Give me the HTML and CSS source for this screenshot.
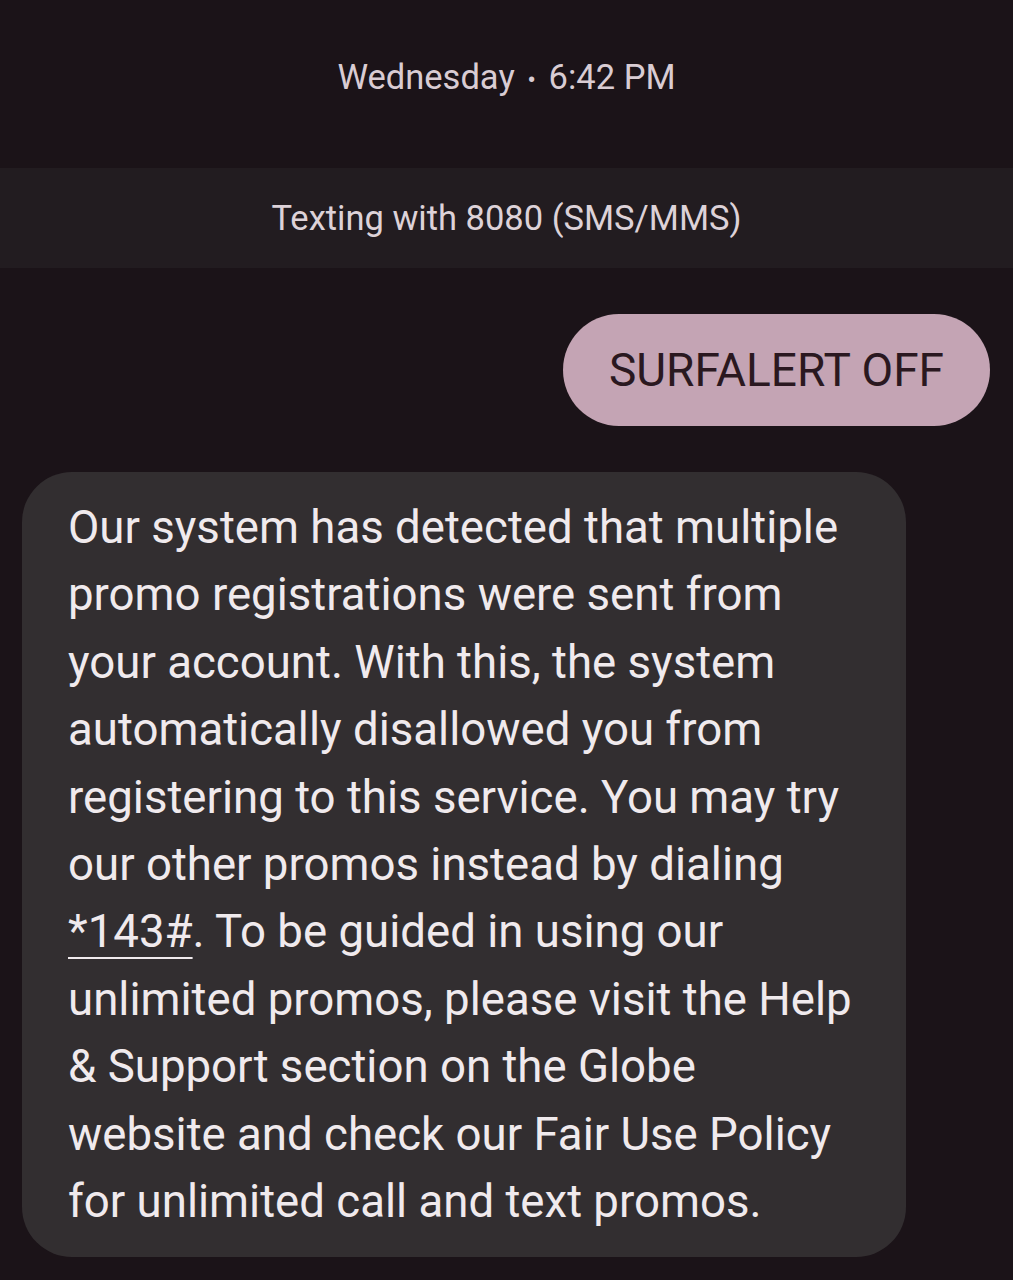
FILE: index.html
```html
<!DOCTYPE html>
<html lang="en">
<head>
  <meta charset="UTF-8" />
  <meta name="viewport" content="width=device-width, initial-scale=1.0"/>
  <title>8080</title>
  <link rel="stylesheet" href="styles.css">
</head>
<body>
  <div class="thread">
    <div class="stamp">Wednesday <span class="dot">•</span> 6:42 PM</div>

    <div class="channel">Texting with 8080 (SMS/MMS)</div>

    <div class="row row-out">
      <div class="bubble bubble-out">SURFALERT OFF</div>
    </div>

    <div class="row row-in">
      <div class="bubble bubble-in">
        Our system has detected that multiple<br>
        promo registrations were sent from<br>
        your account. With this, the system<br>
        automatically disallowed you from<br>
        registering to this service. You may try<br>
        our other promos instead by dialing<br>
        <span class="link">*143#</span>. To be guided in using our<br>
        unlimited promos, please visit the Help<br>
        &amp; Support section on the Globe<br>
        website and check our Fair Use Policy<br>
        for unlimited call and text promos.
      </div>
    </div>
  </div>
</body>
</html>
```

FILE: styles.css
```css
* { box-sizing: border-box; margin: 0; padding: 0; }
body {
  font-family: Roboto, "Noto Sans", sans-serif;
  background: #1b1318;
  color: #ece4e8;
  width: 1013px;
  height: 1280px;
  overflow: hidden;
}
.thread {
  display: flex;
  flex-direction: column;
}
.stamp {
  height: 168px;
  padding-top: 52px;
  line-height: 50px;
  text-align: center;
  font-size: 34.5px;
  color: #d9ccd3;
}
.stamp .dot {
  font-size: 26px;
  margin: 0 4px;
}
.channel {
  height: 100px;
  display: flex;
  align-items: center;
  justify-content: center;
  background: #221c20;
  font-size: 34.5px;
  color: #ddd2d8;
}
.row {
  display: flex;
  margin-top: 46px;
}
.row-out {
  justify-content: flex-end;
  padding-right: 23px;
}
.row-in {
  padding-left: 22px;
}
.bubble-out {
  height: 112px;
  padding: 0 46px;
  display: flex;
  align-items: center;
  background: #c4a4b4;
  color: #2a1820;
  border-radius: 56px;
  font-size: 46px;
}
.bubble-in {
  width: 884px;
  padding: 22px 20px 22px 46px;
  background: #322e30;
  color: #f0eaed;
  border-radius: 50px;
  font-size: 45.6px;
  line-height: 67.4px;
  white-space: nowrap;
}
.link {
  text-decoration: underline;
  text-decoration-thickness: 2px;
  text-underline-offset: 10px;
}
```
